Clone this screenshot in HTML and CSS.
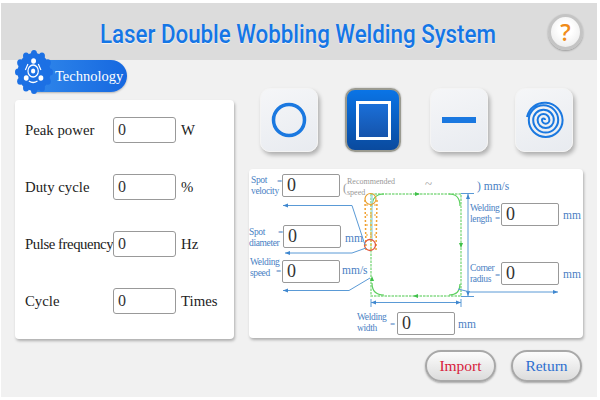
FILE: index.html
```html
<!DOCTYPE html>
<html lang="en">
<head>
<meta charset="utf-8">
<title>Laser Double Wobbling Welding System</title>
<link rel="stylesheet" href="styles.css">
</head>
<body>
<div class="app">
  <header class="header">
    <h1 class="title">Laser Double Wobbling Welding System</h1>
    <button class="help" type="button"><span class="help-mark">?</span></button>
  </header>
  <div class="main">
    <div class="badge">
      <span class="badge-pill">Technology</span>
      <svg class="badge-gear" viewBox="0 0 44 44" preserveAspectRatio="none">
        <g fill="#1c70e4">
          <circle cx="22" cy="22" r="19"/>
          <circle cx="22" cy="3.500" r="3.500"/><circle cx="31.200" cy="6" r="3.500"/><circle cx="38" cy="12.800" r="3.500"/><circle cx="40.500" cy="22" r="3.500"/><circle cx="38" cy="31.200" r="3.500"/><circle cx="31.200" cy="38" r="3.500"/><circle cx="22" cy="40.500" r="3.500"/><circle cx="12.800" cy="38" r="3.500"/><circle cx="6" cy="31.200" r="3.500"/><circle cx="3.500" cy="22" r="3.500"/><circle cx="6" cy="12.800" r="3.500"/><circle cx="12.800" cy="6" r="3.500"/>
        </g>
        <g fill="none" stroke="#fff" stroke-width="1.400">
          <circle cx="21" cy="21" r="6"/>
          <path d="M15 14 L12 20 M27 14 L30 20 M16 31 Q21 34 26 31"/>
        </g>
        <g fill="#fff"><circle cx="21.500" cy="11" r="2.800"/><circle cx="13" cy="28" r="2.800"/><circle cx="30" cy="28" r="2.800"/><circle cx="21" cy="21" r="2.500"/></g>
      </svg>
    </div>
    <div class="content">
      <section class="card params">
        <div class="row"><span class="row-label">Peak power</span><input class="field" value="0"><span class="row-unit">W</span></div>
        <div class="row"><span class="row-label">Duty cycle</span><input class="field" value="0"><span class="row-unit">%</span></div>
        <div class="row"><span class="row-label row-label-tight">Pulse frequency</span><input class="field" value="0"><span class="row-unit">Hz</span></div>
        <div class="row"><span class="row-label">Cycle</span><input class="field" value="0"><span class="row-unit">Times</span></div>
      </section>
      <div class="right">
        <div class="shapes">
          <button class="shape" type="button">
            <svg width="36" height="36" viewBox="0 0 36 36"><circle cx="18" cy="18" r="15.500" fill="none" stroke="#1a78e0" stroke-width="3.500"/></svg>
          </button>
          <button class="shape shape-on" type="button"><span class="square"></span></button>
          <button class="shape" type="button"><span class="dash"></span></button>
          <button class="shape" type="button">
            <svg width="40" height="40" viewBox="0 0 40 40"><path d="M21 20 A1.500 1.500 0 0 0 18 20 A3.700 3.700 0 0 0 25.400 20 A5.900 5.900 0 0 0 13.600 20 A8.100 8.100 0 0 0 29.800 20 A10.300 10.300 0 0 0 9.200 20 A12.500 12.500 0 0 0 34.200 20 A14.700 14.700 0 0 0 4.800 20 A16.900 16.900 0 0 0 38.600 20 A18 18 0 0 0 3 17" fill="none" stroke="#1a78e0" stroke-width="2"/></svg>
          </button>
        </div>
        <section class="card diagram">
          <svg class="drawing" viewBox="249 169 334 169">
            <defs>
              <marker id="head" markerUnits="userSpaceOnUse" markerWidth="6" markerHeight="6" refX="5" refY="3" orient="auto-start-reverse"><path d="M0 1 L5 3 L0 5Z" fill="#3f87cf"/></marker>
            </defs>
            <rect x="371" y="194" width="90" height="102" fill="none" stroke="#86da86" stroke-width="1.400" stroke-dasharray="2.500 1"/>
            <path d="M372 207 Q372 194 384 194 M449 194 Q460 194 460 206 M460 284 Q460 295 449 295 M384 295 Q372 295 372 283" fill="none" stroke="#5fd060" stroke-width="1.200"/>
            <path d="M372 195 V240" stroke="#a8d8ea" stroke-width="1.500"/>
            <g fill="#3fc04a"><path d="M415 192 L420 194 L415 196Z"/><path d="M418 294 L413 296 L418 298Z"/><path d="M459 243 L461 248 L463 243Z"/><path d="M370 281 L372 276 L374 281Z"/></g>
            <g fill="none" stroke="#f0a030" stroke-width="1.500" stroke-dasharray="2 2">
              <path d="M365 200 L366 250"/><path d="M371 204 L371 250" stroke="#e8c050"/><path d="M377 200 L376 250"/>
              <path d="M366 205 H377 M366 215 H377 M366 225 H377 M366 235 H377" stroke-width="1"/>
            </g>
            <circle cx="370.500" cy="199" r="5.500" fill="none" stroke="#e8a030" stroke-width="1.200"/>
            <circle cx="370" cy="245" r="5.500" fill="none" stroke="#e05a40" stroke-width="1.300"/>
            <g fill="none" stroke="#5a9ad6" stroke-width="1">
              <path d="M283 205.500 H352 L365 245" marker-start="url(#head)"/>
              <path d="M285 253 H352 L366 248" marker-start="url(#head)"/>
              <path d="M283 290.500 H349 L370 278" marker-start="url(#head)"/>
              <path d="M371 302.500 H461" marker-start="url(#head)" marker-end="url(#head)"/>
              <path d="M371 299 V307 M461 299 V307"/>
              <path d="M468 194 V296" marker-start="url(#head)" marker-end="url(#head)"/>
              <path d="M461 193.500 H474 M461 296.500 H474"/>
              <path d="M458 289 L470 292 H558" marker-end="url(#head)"/>
            </g>
          </svg>
          <span class="lb lb-sv">Spot<br>velocity</span><span class="eq eq-sv">=</span>
          <input class="mini in-sv" value="0">
          <span class="paren paren-l">(</span>
          <span class="rec">Recommended<br>speed</span>
          <span class="tilde">~</span>
          <span class="unit un-rec">) mm/s</span>
          <span class="lb lb-sd">Spot<br>diameter</span><span class="eq eq-sd">=</span>
          <input class="mini in-sd" value="0">
          <span class="unit un-sd">mm</span>
          <span class="lb lb-ws">Welding<br>speed</span><span class="eq eq-ws">=</span>
          <input class="mini in-ws" value="0">
          <span class="unit un-ws">mm/s</span>
          <span class="lb lb-wd">Welding<br>width</span><span class="eq eq-wd">=</span>
          <input class="mini in-wd" value="0">
          <span class="unit un-wd">mm</span>
          <span class="lb lb-wl">Welding<br>length</span><span class="eq eq-wl">=</span>
          <input class="mini in-wl" value="0">
          <span class="unit un-wl">mm</span>
          <span class="lb lb-cr">Corner<br>radius</span><span class="eq eq-cr">=</span>
          <input class="mini in-cr" value="0">
          <span class="unit un-cr">mm</span>
        </section>
        <div class="actions">
          <button class="pill pill-import" type="button">Import</button>
          <button class="pill pill-return" type="button">Return</button>
        </div>
      </div>
    </div>
  </div>
</div>
</body>
</html>
```
FILE: styles.css
```css
* { box-sizing: border-box; }
html, body { margin: 0; padding: 0; background: #fff; }
body { width: 600px; height: 400px; overflow: hidden; padding: 3px 3px 3px 1px; }
.app { width: 596px; height: 394px; background: #f1f1f1; display: flex; flex-direction: column; }
.header { height: 57px; flex: none; background: #dcdcdc; display: flex; align-items: center; justify-content: space-between; padding: 4px 14px 0 99px; }
.title { width: 397px; margin: 0; font: 500 25.500px "Roboto", sans-serif; color: #1576e6; white-space: nowrap; transform: scaleX(.875); transform-origin: left center; text-shadow: 0 1px 1px rgba(255,255,255,.7); }
.help { width: 35px; height: 36px; flex: none; margin-top: -4px; padding: 0; border-radius: 50%; border: 3px solid #c4c4c4; background: radial-gradient(circle at 50% 40%, #fff 30%, #e6e6e6 100%); box-shadow: 0 1px 2px rgba(0,0,0,.3); }
.help-mark { font: 600 23px "Open Sans", sans-serif; color: #f08c1a; line-height: 28px; }
.main { flex: 1; position: relative; padding: 0 14px; }
.badge { position: absolute; left: 14px; top: -10px; width: 112px; height: 44px; }
.badge-gear { position: absolute; left: 0; top: 0; width: 38px; height: 44px; }
.badge-pill { position: absolute; left: 20px; top: 10px; width: 92px; height: 32px; padding-left: 20px; border-radius: 0 16px 16px 0; background: linear-gradient(90deg, #2f86ea, #1668e0); box-shadow: 0 1px 2px rgba(0,0,0,.25); color: #fff; font: 400 14.500px/32px "Liberation Serif", serif; white-space: nowrap; }
.content { display: flex; align-items: flex-start; gap: 15px; }
.card { background: #fff; border-radius: 4px; box-shadow: 1px 2px 3px rgba(0,0,0,.28); }
.params { width: 219px; height: 239px; margin-top: 40px; padding: 17px 0 0 10px; display: flex; flex-direction: column; gap: 31px; }
.row { display: flex; align-items: center; height: 26px; }
.row-label { width: 88px; flex: none; font: 400 14.800px "Liberation Serif", serif; color: #222; white-space: nowrap; }
.row-label-tight { letter-spacing: -0.45px; }
.row-unit { margin-left: 5px; font: 400 14.800px "Liberation Serif", serif; color: #222; }
.field { width: 63px; height: 26px; flex: none; padding: 0 0 0 4px; border: 1px solid #999; border-radius: 3px; background: #fff; font: 400 16px "Liberation Serif", serif; color: #333; }
.right { width: 334px; display: flex; flex-direction: column; }
.shapes { display: flex; gap: 27px; padding: 28px 0 0 11px; height: 109px; }
.shape { width: 58px; height: 64px; padding: 0; display: flex; align-items: center; justify-content: center; border: 1px solid #f4f4f4; border-radius: 10px; background: linear-gradient(160deg, #f5f6f8, #e8ebf0); box-shadow: 2px 3px 4px rgba(0,0,0,.28); }
.shape-on { width: 56px; border: 2px solid #9a9a90; background: linear-gradient(180deg, #0a74e6, #0a4a9e); box-shadow: 0 0 2px rgba(0,0,0,.3); margin-right: 2px; }
.square { width: 35px; height: 39px; border: 3px solid #fff; background: linear-gradient(180deg, #1a6fd8, #1554ac); }
.dash { width: 34px; height: 6px; background: #1a78e0; }
.diagram { height: 169px; position: relative; }
.drawing { position: absolute; left: 0; top: 0; width: 334px; height: 169px; }
.lb { position: absolute; font: 400 9.500px/10.500px "Liberation Serif", serif; letter-spacing: -0.35px; color: #4a7fc4; white-space: nowrap; }
.eq { position: absolute; font: 400 9px/7px "Liberation Serif", serif; color: #4a7fc4; }
.unit { position: absolute; font: 400 11.500px/14px "Liberation Serif", serif; color: #4a7fc4; white-space: nowrap; }
.rec { position: absolute; left: 98px; top: 8px; font: 400 8px/10.500px "Liberation Serif", serif; color: #999; }
.paren { position: absolute; font: 400 12px/14px "Liberation Serif", serif; color: #999; }
.paren-l { left: 94px; top: 12px; }
.tilde { position: absolute; left: 176px; top: 8px; font: 400 13px/14px "Liberation Serif", serif; color: #999; }
.mini { position: absolute; width: 58px; height: 23px; padding: 0 0 0 4px; border: 1px solid #999; border-radius: 2px; background: #fff; font: 400 18px "Liberation Serif", serif; color: #333; }
.lb-sv { left: 2px; top: 6px; } .eq-sv { left: 28px; top: 9px; } .in-sv { left: 33px; top: 5px; }
.lb-sd { left: 0; top: 58px; } .eq-sd { left: 29px; top: 60px; } .in-sd { left: 34px; top: 56px; }
.lb-ws { left: 1px; top: 88px; } .eq-ws { left: 27px; top: 99px; } .in-ws { left: 33px; top: 91px; }
.lb-wd { left: 108px; top: 143px; } .eq-wd { left: 141px; top: 152px; } .in-wd { left: 148px; top: 143px; }
.lb-wl { left: 221px; top: 34px; } .eq-wl { left: 246px; top: 46px; } .in-wl { left: 252px; top: 34px; }
.lb-cr { left: 221px; top: 94px; } .eq-cr { left: 246px; top: 103px; } .in-cr { left: 252px; top: 93px; }
.un-rec { left: 228px; top: 10px; } .un-sd { left: 96px; top: 62px; } .un-ws { left: 93px; top: 94px; }
.un-wd { left: 209px; top: 148px; } .un-wl { left: 314px; top: 39px; } .un-cr { left: 314px; top: 98px; }
.actions { display: flex; justify-content: flex-end; gap: 15px; padding: 12px 1px 0 0; }
.pill { width: 71px; height: 32px; padding: 0; border: 2px solid #a8a8a8; border-radius: 16px; background: linear-gradient(180deg, #fcfcfc, #dcdcdc); box-shadow: 0 1px 2px rgba(0,0,0,.3); font: 400 15.500px "Liberation Serif", serif; }
.pill-import { color: #d81c3c; }
.pill-return { color: #2c6fd0; }
```
